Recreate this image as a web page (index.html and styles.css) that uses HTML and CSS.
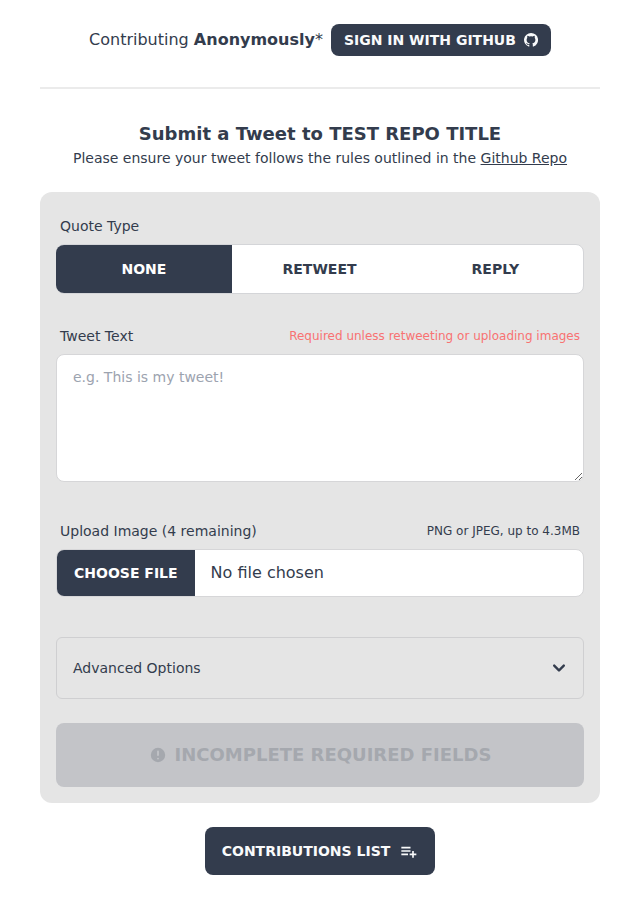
FILE: index.html
```html
<!DOCTYPE html>
<html lang="en">
<head>
<meta charset="utf-8">
<meta name="viewport" content="width=device-width, initial-scale=1">
<title>Submit a Tweet</title>
<link rel="stylesheet" href="styles.css">
</head>
<body>
<main class="page">
  <header class="account">
    <p>Contributing <strong>Anonymously</strong>*</p>
    <button class="btn btn-small" type="button">Sign in with GitHub
      <svg class="icon-github" viewBox="0 0 14 14" fill="currentColor" aria-hidden="true"><path d="M7 0a7 7 0 0 0-2.3 13.6c.4.1.6-.1.6-.4v-1.3c-1.4.3-2.1-.2-2.5-1-.2-.4-.4-.6-.8-.9.8-.2 1.2.3 1.5.7.5.7 1.1.7 1.8.5.1-.4.2-.7.4-.9-1.9-.3-3.1-1.4-3.1-3.6 0-.8.3-1.5.7-2-.2-.7-.1-1.4.1-1.9.8 0 1.4.4 1.9.7a6.500 6.500 0 0 1 3.4 0c.5-.3 1.100-.7 1.900-.7.2.5.3 1.200.1 1.900.4.500.7 1.200.7 2 0 2.200-1.200 3.300-3.100 3.600.3.300.5.800.5 1.400v1.500c0 .300.200.500.600.400A7 7 0 0 0 7 0z"/></svg>
    </button>
  </header>
  <hr class="divider">
  <section class="intro">
    <h1>Submit a Tweet to TEST REPO TITLE</h1>
    <p>Please ensure your tweet follows the rules outlined in the <a href="#">Github Repo</a></p>
  </section>
  <form class="card">
    <div class="label"><span>Quote Type</span></div>
    <div class="tabs">
      <button class="tab tab-active" type="button">None</button>
      <button class="tab tab-middle" type="button">Retweet</button>
      <button class="tab" type="button">Reply</button>
    </div>
    <div class="label label-spaced"><label for="text">Tweet Text</label><span class="hint hint-error">Required unless retweeting or uploading images</span></div>
    <textarea class="textarea" id="text" placeholder="e.g. This is my tweet!"></textarea>
    <div class="label label-upload"><label for="image">Upload Image (4 remaining)</label><span class="hint">PNG or JPEG, up to 4.3MB</span></div>
    <input class="file" id="image" type="file">
    <div class="advanced">
      <span>Advanced Options</span>
      <svg class="icon-chevron" viewBox="0 0 20 20" fill="currentColor" aria-hidden="true"><path fill-rule="evenodd" d="M5.293 7.293a1 1 0 011.414 0L10 10.586l3.293-3.293a1 1 0 111.414 1.414l-4 4a1 1 0 01-1.414 0l-4-4a1 1 0 010-1.414z"/></svg>
    </div>
    <button class="submit" type="button" disabled>
      <svg class="icon-alert" viewBox="0 0 20 20" fill="currentColor" aria-hidden="true"><path fill-rule="evenodd" d="M18 10a8 8 0 11-16 0 8 8 0 0116 0zm-7 4a1 1 0 11-2 0 1 1 0 012 0zm-1-9a1 1 0 00-1 1v4a1 1 0 102 0V6a1 1 0 00-1-1z"/></svg>
      Incomplete required fields
    </button>
  </form>
  <button class="btn btn-list" type="button">Contributions list
    <svg class="icon-list" viewBox="0 0 24 24" fill="currentColor" aria-hidden="true"><path d="M19 15v-3h-2v3h-3v2h3v3h2v-3h3v-2h-.937zM4 7h11v2H4zm0 4h11v2H4zm0 4h8v2H4z"/></svg>
  </button>
</main>
</body>
</html>
```
FILE: styles.css
```css
* { box-sizing: border-box; margin: 0; }
body {
  background: #fff;
  color: #333c4d;
  font: 16px/24px "DejaVu Sans", sans-serif;
}
button { font-family: inherit; border: 0; }
.page {
  display: flex;
  flex-direction: column;
  padding: 24px 40px;
}
.account {
  display: flex;
  justify-content: center;
  align-items: center;
  gap: 8px;
}
.btn {
  display: flex;
  align-items: center;
  background: #333c4d;
  color: #f9fafb;
  border-radius: 8px;
  font-size: 14px;
  font-weight: 700;
  line-height: 14px;
  text-transform: uppercase;
}
.btn-small { height: 32px; padding: 0 13px; gap: 8px; }
.icon-github { width: 14px; height: 14px; }
.divider { height: 2px; border: 0; background: #ebebeb; margin: 31px 0; }
.intro { text-align: center; }
.intro h1 { font-size: 18px; line-height: 28px; }
.intro p { font-size: 14px; line-height: 20px; }
.intro a { color: inherit; }
.card {
  display: flex;
  flex-direction: column;
  margin-top: 24px;
  padding: 16px;
  background: #e5e5e5;
  border-radius: 12px;
}
.label {
  display: flex;
  justify-content: space-between;
  align-items: center;
  height: 36px;
  padding: 0 4px;
  font-size: 14px;
  line-height: 20px;
}
.label-spaced { margin-top: 24px; }
.label-upload { margin-top: 31px; }
.hint { font-size: 12px; line-height: 16px; }
.hint-error { color: #f87272; }
.tabs {
  display: grid;
  grid-template-columns: repeat(3, 1fr);
  height: 50px;
  border: 1px solid #d4d5d8;
  border-radius: 8px;
  background: #fff;
}
.tab {
  padding: 0;
  background: transparent;
  color: #333c4d;
  font-size: 14px;
  font-weight: 700;
  text-transform: uppercase;
}
.tab-middle { padding-right: 1px; }
.tab-active {
  margin-left: -1px;
  padding-right: 0.5px;
  background: #333c4d;
  color: #fff;
  border-radius: 8px 0 0 8px;
}
.textarea {
  height: 128px;
  padding: 8px 16px;
  border: 1px solid #d6d6d8;
  border-radius: 8px;
  background: #fff;
  color: inherit;
  font: 14px/28px "DejaVu Sans", sans-serif;
}
.textarea::placeholder { color: #9ca3af; }
.file {
  width: 100%;
  height: 48px;
  padding-right: 16px;
  border: 1px solid #d6d6d8;
  border-radius: 8px;
  overflow: hidden;
  background: #fff;
  color: inherit;
  font: 16px/32px "DejaVu Sans", sans-serif;
}
.file::file-selector-button {
  height: 46px;
  margin: 0 16px 0 0;
  padding: 0 17px;
  border: 0;
  background: #333c4d;
  color: #fff;
  font: 700 14px/14px "DejaVu Sans", sans-serif;
  text-transform: uppercase;
}
.advanced {
  display: flex;
  justify-content: space-between;
  align-items: center;
  height: 62px;
  margin-top: 40px;
  padding: 0 12px 0 16px;
  border: 1px solid #cfcfd1;
  border-radius: 6px;
  font-size: 14px;
}
.icon-chevron { width: 24px; height: 24px; }
.submit {
  display: flex;
  align-items: center;
  justify-content: center;
  gap: 8px;
  height: 64px;
  margin-top: 24px;
  border-radius: 8px;
  background: #c3c4c8;
  color: #a5a8ae;
  font-size: 18px;
  font-weight: 700;
  line-height: 18px;
  text-transform: uppercase;
}
.icon-alert { width: 18px; height: 18px; }
.btn-list {
  align-self: center;
  height: 48px;
  margin-top: 24px;
  padding: 0 17px;
  gap: 8px;
}
.icon-list { width: 20px; height: 20px; }
```
